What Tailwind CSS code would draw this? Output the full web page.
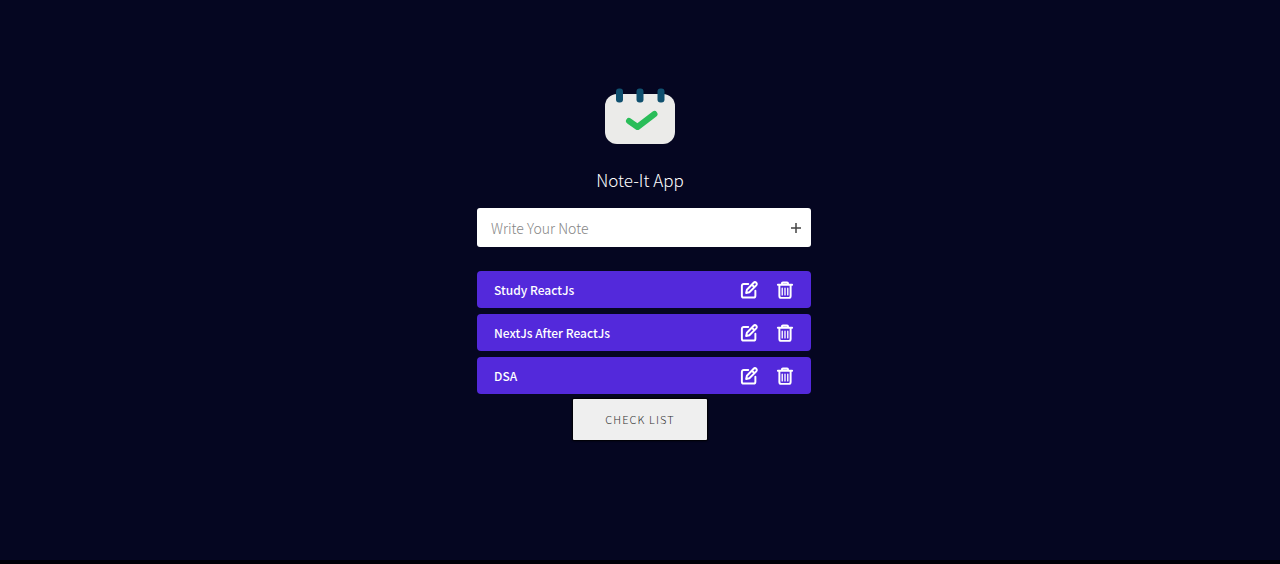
<!DOCTYPE html>
<html lang="en">
<head>
<meta charset="utf-8">
<meta name="viewport" content="width=device-width, initial-scale=1">
<title>Note-It App</title>
<script src="https://cdn.jsdelivr.net/npm/@tailwindcss/browser@4"></script>
</head>
<body class="flex min-h-screen flex-col items-center border-b-4 border-[#000008] bg-[#050621] px-4 pt-22 font-['Noto_Sans_CJK_SC',sans-serif] font-light text-white">
<svg width="0" height="0" class="absolute" aria-hidden="true">
  <symbol id="edit" viewBox="0 0 24 24" fill="none" stroke="currentColor" stroke-width="2.6" stroke-linecap="round" stroke-linejoin="round">
    <path d="M11 4H5a2.500 2.500 0 0 0-2.500 2.500v13A2.500 2.500 0 0 0 5 22h13a2.500 2.500 0 0 0 2.500-2.500V13"/>
    <path d="M18.2 2.400a2.4 2.4 0 0 1 3.5 3.5L12.5 15l-4.3 1 1-4.3zM16 5l3 3"/>
  </symbol>
  <symbol id="trash" viewBox="0 0 24 24" fill="none" stroke="currentColor" stroke-width="2.6" stroke-linecap="round" stroke-linejoin="round">
    <path d="M2.500 5h19M8 4.5V3.2Q8 2 9.2 2h5.6Q16 2 16 3.2v1.3M4.500 5.500v14.500a2.500 2.500 0 0 0 2.500 2.500h10a2.500 2.500 0 0 0 2.500-2.500V5.500"/>
    <path stroke-width="1.8" d="M8.300 9.500v9M12 9.500v9M15.700 9.500v9"/>
  </symbol>
</svg>
<svg class="h-14 w-[70px]" viewBox="0 0 70 56" role="img" aria-label="Note-It logo">
  <rect y="6" width="70" height="50" rx="12" fill="#ebebe9"/>
  <g fill="#10506f"><rect x="11" y="0.500" width="7" height="14" rx="3"/><rect x="31.500" y="0.500" width="7" height="14" rx="3"/><rect x="52.500" y="0.500" width="7" height="14" rx="3"/></g>
  <path d="M24 33l8.500 6L49.500 26" fill="none" stroke="#2abd59" stroke-width="6" stroke-linecap="round" stroke-linejoin="round"/>
</svg>
<h1 class="mt-6 text-[17px] leading-6">Note-It App</h1>
<main class="ml-2 flex w-full max-w-[334px] flex-col">
  <form class="mt-4 flex h-[39px] items-center rounded-[3px] bg-white pr-2 pl-[14px]">
    <input type="text" aria-label="Write Your Note" placeholder="Write Your Note" class="min-w-0 flex-1 text-sm font-light text-black outline-none placeholder:text-[#858585]">
    <button type="button" aria-label="Add note" class="text-[#444]">
      <svg class="size-[14px]" viewBox="0 0 14 14" fill="none" stroke="currentColor" stroke-width="1.500"><path d="M7 2v10M2 7h10"/></svg>
    </button>
  </form>
  <ul class="mt-6 flex flex-col gap-1.5 text-xs font-medium">
    <li class="flex h-[37px] items-center rounded bg-[#5329db] pr-[17px] pl-[17px]">
      <span class="flex-1">Study ReactJs</span>
      <button type="button" aria-label="Edit Study ReactJs" class="mr-[18px]"><svg class="size-[18px]"><use href="#edit"/></svg></button>
      <button type="button" aria-label="Delete Study ReactJs"><svg class="size-[18px]"><use href="#trash"/></svg></button>
    </li>
    <li class="flex h-[37px] items-center rounded bg-[#5329db] pr-[17px] pl-[17px]">
      <span class="flex-1">NextJs After ReactJs</span>
      <button type="button" aria-label="Edit NextJs After ReactJs" class="mr-[18px]"><svg class="size-[18px]"><use href="#edit"/></svg></button>
      <button type="button" aria-label="Delete NextJs After ReactJs"><svg class="size-[18px]"><use href="#trash"/></svg></button>
    </li>
    <li class="flex h-[37px] items-center rounded bg-[#5329db] pr-[17px] pl-[17px]">
      <span class="flex-1">DSA</span>
      <button type="button" aria-label="Edit DSA" class="mr-[18px]"><svg class="size-[18px]"><use href="#edit"/></svg></button>
      <button type="button" aria-label="Delete DSA"><svg class="size-[18px]"><use href="#trash"/></svg></button>
    </li>
  </ul>
</main>
<button type="button" class="mt-[5px] h-[41px] rounded-[1px] bg-[#efefef] px-8 text-[11px] font-light tracking-widest text-[#333] shadow-[0_0_2px_1px_#000]">CHECK LIST</button>
</body>
</html>
